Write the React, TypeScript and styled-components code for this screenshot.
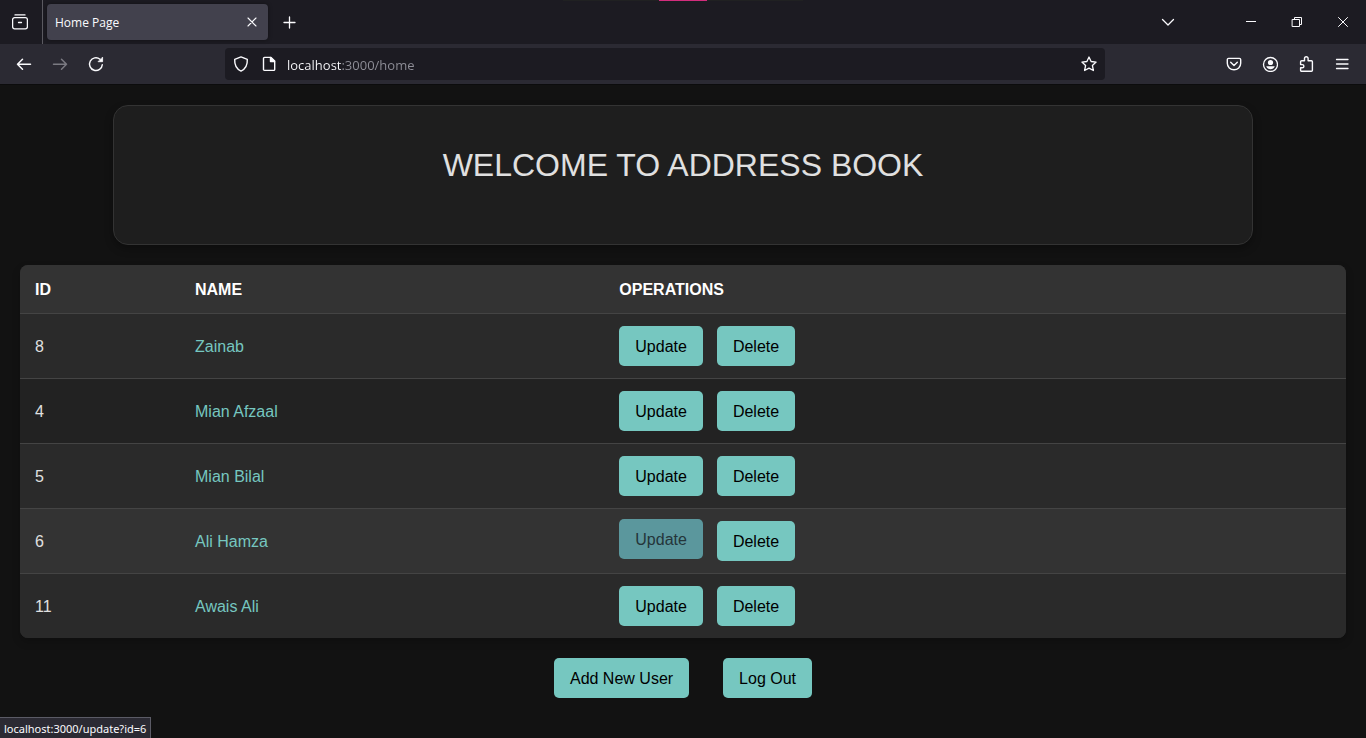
import React from "react";
import styled, { createGlobalStyle, css } from "styled-components";

const GlobalStyle = createGlobalStyle`
  *, *::before, *::after { box-sizing: border-box; }
  body {
    margin: 0;
    background: #121212;
    color: #e0e0e0;
    font-family: "Liberation Sans", Arial, sans-serif;
    font-size: 16px;
  }
  button, input { font: inherit; }
`;

const uiFont = `"Open Sans", "Segoe UI", "Noto Sans", sans-serif`;

const Window = styled.div`
  display: flex;
  flex-direction: column;
  min-height: 100vh;
`;

/* ---------- Browser chrome ---------- */

const TabStrip = styled.header`
  position: relative;
  display: flex;
  align-items: center;
  height: 44px;
  background: #1c1b22;
  color: #fbfbfe;
  font-family: ${uiFont};
  font-size: 12px;
`;

const TopHandle = styled.div`
  position: absolute;
  top: 0;
  left: 50%;
  width: 240px;
  height: 1px;
  transform: translateX(-50%);
  background: linear-gradient(#d22d7d, #d22d7d) center / 48px 1px no-repeat #202122;
`;

const IconButton = styled.button<{ $width?: number; $dim?: boolean }>`
  display: flex;
  flex: none;
  align-items: center;
  justify-content: center;
  width: ${({ $width = 36 }) => $width}px;
  height: 32px;
  padding: 0;
  border: 0;
  background: none;
  color: ${({ $dim }) => ($dim ? "#7b7a82" : "#fbfbfe")};
`;

const ViewSection = styled.div`
  display: flex;
  align-items: center;
  align-self: stretch;
  width: 43px;
  margin-right: 4px;
  padding-left: 2px;
  border-right: 1px solid #5b5a61;
`;

const Tab = styled.div`
  display: flex;
  align-items: center;
  justify-content: space-between;
  width: 221px;
  height: 36px;
  padding: 0 4px 0 8px;
  border-radius: 4px;
  background: #42414d;
  box-shadow: 0 0 4px rgba(0, 0, 0, 0.4);
`;

const WindowControls = styled.div`
  display: flex;
  margin-left: auto;
`;

const Toolbar = styled.nav`
  display: flex;
  align-items: center;
  justify-content: space-between;
  height: 41px;
  padding: 0 6px;
  border-bottom: 1px solid #0c0c0d;
  background: #2b2a33;
`;

const ToolGroup = styled.div`
  display: flex;
  flex: 1;
`;

const EndGroup = styled(ToolGroup)`
  justify-content: flex-end;
  padding-left: 36px;
`;

const AddressBar = styled.form`
  display: flex;
  flex: 0 1 880px;
  align-items: center;
  height: 32px;
  border-radius: 4px;
  background: #1c1b22;
  font-family: ${uiFont};
`;

const AddressInput = styled.input`
  flex: 1;
  min-width: 0;
  height: 32px;
  margin-left: 6px;
  padding: 2px 0 0;
  border: 0;
  outline: 0;
  background: linear-gradient(90deg, #fbfbfe 55px, #8f8f98 55px);
  background-clip: text;
  -webkit-background-clip: text;
  color: transparent;
  font-size: 13px;
`;

const StatusPanel = styled.div`
  position: fixed;
  bottom: 0;
  left: 0;
  height: 21px;
  padding: 0 4px;
  border: 1px solid #5b5b66;
  border-width: 1px 1px 0 0;
  background: #2b2a33;
  color: #fbfbfe;
  font-family: "Noto Sans", "Segoe UI", sans-serif;
  font-size: 11px;
  line-height: 22px;
`;

/* ---------- Page ---------- */

const Page = styled.main`
  display: flex;
  flex-direction: column;
  gap: 20px;
  padding: 20px;
`;

const Banner = styled.section`
  width: 100%;
  max-width: 1140px;
  min-height: 140px;
  margin: 0 auto;
  padding: 39px 20px;
  border: 1px solid #333;
  border-radius: 15px;
  background: #1e1e1e;
  box-shadow: 0 4px 8px rgba(0, 0, 0, 0.3);
  text-align: center;
`;

const Title = styled.h1`
  margin: 0;
  font-size: 32px;
  font-weight: 400;
  line-height: 40px;
`;

const TableCard = styled.div`
  overflow: hidden;
  border-radius: 8px;
  background: #2a2a2a;
  box-shadow: 0 4px 8px rgba(0, 0, 0, 0.2);
`;

const Table = styled.table`
  width: 100%;
  border-collapse: separate;
  border-spacing: 0;
  table-layout: fixed;
  text-align: left;
`;

const HeadCell = styled.th<{ $width?: string }>`
  width: ${({ $width = "auto" }) => $width};
  height: 49px;
  padding: 2px 15px 0;
  border-bottom: 1px solid #444;
  background: #333;
  color: #fff;
`;

const Cell = styled.td<{ $accent?: boolean }>`
  padding: 14px 15px 12px;
  border-bottom: 1px solid #444;
  color: ${({ $accent }) => ($accent ? "#76c7c0" : "#e0e0e0")};
`;

const ActionCell = styled(Cell)`
  padding: 12px 15px;
`;

const Row = styled.tr<{ $active?: boolean }>`
  background: #2a2a2a;
  &:nth-child(even) { background: ${({ $active }) => ($active ? "#333" : "#222")}; }
  &:last-child ${Cell}, &:last-child ${ActionCell} { border-bottom: 0; }
`;

const Operations = styled.div`
  display: flex;
  gap: 14px;
`;

const actionStyle = css<{ $active?: boolean }>`
  display: block;
  height: 40px;
  padding: 1px 16px 0;
  border: 0;
  border-radius: 5px;
  background: #76c7c0;
  color: #000;
  font-size: 16px;
  line-height: 39px;
  text-decoration: none;
  white-space: nowrap;
  cursor: pointer;
  ${({ $active }) =>
    $active &&
    css`
      background: #5b979d;
      color: #24353a;
      transform: translateY(-2px);
    `}
`;

const ActionLink = styled.a<{ $active?: boolean }>`${actionStyle}`;
const ActionButton = styled.button<{ $active?: boolean }>`${actionStyle}`;

const PageActions = styled.div`
  display: flex;
  justify-content: center;
  gap: 34px;
`;

/* ---------- Icons ---------- */

type IconProps = { children: React.ReactNode; width?: number };

const Icon = ({ children, width = 1.3 }: IconProps) => (
  <svg
    width="16"
    height="16"
    viewBox="0 0 16 16"
    fill="none"
    stroke="currentColor"
    strokeWidth={width}
    strokeLinecap="round"
    strokeLinejoin="round"
    aria-hidden="true"
  >
    {children}
  </svg>
);

const ViewIcon = () => (
  <Icon>
    <path d="M3 .9h10M2.6 3.6h10.8a2 2 0 0 1 2 2v7.2a2 2 0 0 1-2 2H2.6a2 2 0 0 1-2-2V5.6a2 2 0 0 1 2-2zM6.500 8.500h3" />
  </Icon>
);
const CloseTabIcon = () => (
  <Icon width={1.1}><path d="M4 4l8 8M12 4l-8 8" /></Icon>
);
const PlusIcon = () => (
  <Icon><path d="M8.500 3v11M3 8.500h11" /></Icon>
);
const ChevronIcon = () => (
  <Icon><path d="M2.500 5.500L8 11l5.500-5.500" /></Icon>
);
const MinimizeIcon = () => (
  <Icon width={1}><path strokeLinecap="butt" d="M3 7.500h10" /></Icon>
);
const RestoreIcon = () => (
  <Icon width={1}>
    <path strokeLinejoin="miter" d="M3.500 5.500h7v7h-7zM5.500 5.500v-2h7v7h-2" />
  </Icon>
);
const CloseWindowIcon = () => (
  <Icon width={1}><path d="M3.500 3.500l9 9M12.500 3.500l-9 9" /></Icon>
);
const BackIcon = () => (
  <Icon width={1.5}><path d="M14.500 8.300h-13M6.500 3.300l-5 5 5 5" /></Icon>
);
const ForwardIcon = () => (
  <Icon width={1.5}><path d="M1.500 8.300h13M9.500 3.300l5 5-5 5" /></Icon>
);
const ReloadIcon = () => (
  <Icon width={1.4}>
    <path d="M14.300 8.600A6.400 6.400 0 1 1 12 3.200" />
    <path d="M14.600 1.500v4.200h-4.200z" fill="currentColor" strokeWidth="0.8" />
  </Icon>
);
const ShieldIcon = () => (
  <Icon width={1.4}>
    <path d="M8 .9l6.300 2.400c.3 5.500-1.700 9.700-6.300 11.800C3.400 13 1.400 8.800 1.700 3.300z" />
  </Icon>
);
const PageIcon = () => (
  <Icon width={1.4}>
    <path d="M3.500 1.400H10l3.700 3.700v8.300a1 1 0 0 1-1 1H3.500a1 1 0 0 1-1-1v-11a1 1 0 0 1 1-1z" />
    <path d="M9.500 1.500v4h4z" fill="currentColor" />
  </Icon>
);
const StarIcon = () => (
  <Icon>
    <path d="M8 1l2.100 4.500 5 .6-3.700 3.400 1 5L8 12.100l-4.400 2.400 1-5L.9 6.100l5-.6z" />
  </Icon>
);
const PocketIcon = () => (
  <Icon width={1.4}>
    <path d="M2.600 2.400h10.800a1.300 1.300 0 0 1 1.300 1.300v3.600a6.700 6.500 0 0 1-13.400 0V3.700a1.300 1.300 0 0 1 1.300-1.300zM4.700 6.300L8 9.500l3.300-3.200" />
  </Icon>
);
const AccountIcon = () => (
  <Icon>
    <circle cx="8.500" cy="8.500" r="7" />
    <circle cx="8.500" cy="6.500" r="2.600" fill="currentColor" stroke="none" />
    <path d="M4.200 10.300h8.600c-.7 1.900-2.300 3-4.300 3s-3.600-1.100-4.300-3z" fill="currentColor" stroke="none" />
  </Icon>
);
const ExtensionIcon = () => (
  <Icon width={1.4}>
    <path d="M3.600 4.700h2.900V2.600a1.800 1.800 0 0 1 3.600 0v2.100h3.300a1 1 0 0 1 1 1v8.600a1 1 0 0 1-1 1H3.600a1 1 0 0 1-1-1v-2.500h1.700a1.600 1.600 0 0 0 0-3.200H2.600V5.700a1 1 0 0 1 1-1z" />
  </Icon>
);
const MenuIcon = () => (
  <Icon width={1.3}><path d="M2.500 3.500h11.500M2.500 8h11.500M2.500 12.500h11.500" /></Icon>
);

/* ---------- Data ---------- */

const users = [
  { id: 8, name: "Zainab" },
  { id: 4, name: "Mian Afzaal" },
  { id: 5, name: "Mian Bilal" },
  { id: 6, name: "Ali Hamza" },
  { id: 11, name: "Awais Ali" },
];
const hoveredId = 6;

const BrowserChrome = () => (
  <>
    <TabStrip>
      <TopHandle />
      <ViewSection>
        <IconButton aria-label="View recent browsing"><ViewIcon /></IconButton>
      </ViewSection>
      <Tab>
        Home Page
        <IconButton $width={24} aria-label="Close tab"><CloseTabIcon /></IconButton>
      </Tab>
      <IconButton $width={42} aria-label="New tab"><PlusIcon /></IconButton>
      <WindowControls>
        <IconButton $width={120} aria-label="List all tabs"><ChevronIcon /></IconButton>
        <IconButton $width={46} aria-label="Minimize"><MinimizeIcon /></IconButton>
        <IconButton $width={46} aria-label="Restore"><RestoreIcon /></IconButton>
        <IconButton $width={46} aria-label="Close window"><CloseWindowIcon /></IconButton>
      </WindowControls>
    </TabStrip>
    <Toolbar aria-label="Navigation">
      <ToolGroup>
        <IconButton aria-label="Back"><BackIcon /></IconButton>
        <IconButton aria-label="Forward" $dim><ForwardIcon /></IconButton>
        <IconButton aria-label="Reload"><ReloadIcon /></IconButton>
      </ToolGroup>
      <AddressBar onSubmit={(e) => e.preventDefault()}>
        <IconButton type="button" $width={32} aria-label="Tracking protection"><ShieldIcon /></IconButton>
        <IconButton type="button" $width={24} aria-label="Site information"><PageIcon /></IconButton>
        <AddressInput aria-label="Address" defaultValue="localhost:3000/home" />
        <IconButton type="button" $width={32} aria-label="Bookmark this page"><StarIcon /></IconButton>
      </AddressBar>
      <EndGroup>
        <IconButton aria-label="Save to Pocket"><PocketIcon /></IconButton>
        <IconButton aria-label="Account"><AccountIcon /></IconButton>
        <IconButton aria-label="Extensions"><ExtensionIcon /></IconButton>
        <IconButton aria-label="Menu"><MenuIcon /></IconButton>
      </EndGroup>
    </Toolbar>
  </>
);

export default function App() {
  return (
    <Window>
      <GlobalStyle />
      <BrowserChrome />
      <Page>
        <Banner>
          <Title>WELCOME TO ADDRESS BOOK</Title>
        </Banner>
        <TableCard>
          <Table>
            <thead>
              <tr>
                <HeadCell $width="160px">ID</HeadCell>
                <HeadCell $width="32%">NAME</HeadCell>
                <HeadCell>OPERATIONS</HeadCell>
              </tr>
            </thead>
            <tbody>
              {users.map(({ id, name }) => (
                <Row key={id} $active={id === hoveredId}>
                  <Cell>{id}</Cell>
                  <Cell $accent>{name}</Cell>
                  <ActionCell>
                    <Operations>
                      <ActionLink href={`/update?id=${id}`} $active={id === hoveredId}>Update</ActionLink>
                      <ActionButton type="button">Delete</ActionButton>
                    </Operations>
                  </ActionCell>
                </Row>
              ))}
            </tbody>
          </Table>
        </TableCard>
        <PageActions>
          <ActionLink href="/add">Add New User</ActionLink>
          <ActionLink href="/logout">Log Out</ActionLink>
        </PageActions>
      </Page>
      <StatusPanel>localhost:3000/update?id=6</StatusPanel>
    </Window>
  );
}
